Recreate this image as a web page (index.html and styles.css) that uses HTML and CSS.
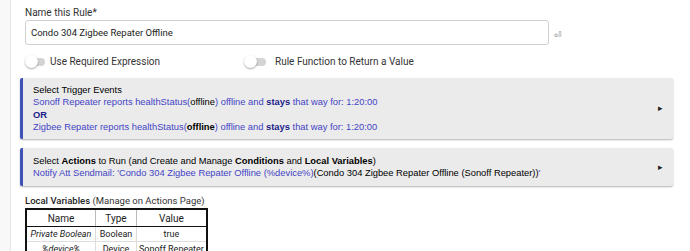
FILE: index.html
```html
<!DOCTYPE html>
<html lang="en">
<head>
<meta charset="UTF-8">
<title>Rule</title>
<link rel="stylesheet" href="styles.css">
</head>
<body>
<div class="side"></div>
<div class="main">
<div class="field">
<label class="label" for="ruleName">Name this Rule*</label>
<div class="input-row">
<input id="ruleName" class="text-input" type="text" value="Condo 304 Zigbee Repater Offline">
<span class="enter">&#9166;</span>
</div>
</div>

<div class="toggles">
<div class="toggle first"><span class="switch"><span class="knob"></span></span>Use Required Expression</div>
<div class="toggle second"><span class="switch"><span class="knob"></span></span>Rule Function to Return a Value</div>
</div>

<div class="panel trigger">
<div class="panel-text">
<div class="title">Select Trigger Events</div>
<div class="blue">Sonoff Repeater reports healthStatus(<span class="black">offline</span>) offline and <b class="navy">stays</b> that way for: 1:20:00</div>
<div class="navy"><b>OR</b></div>
<div class="blue">Zigbee Repater reports healthStatus(<b class="black">offline</b>) offline and <b class="navy">stays</b> that way for: 1:20:00</div>
</div>
<span class="arrow">&#9656;</span>
</div>

<div class="panel actions">
<div class="panel-text">
<div class="title">Select <b>Actions</b> to Run (and Create and Manage <b>Conditions</b> and <b>Local Variables</b>)</div>
<div class="blue">Notify Att Sendmail: 'Condo 304 Zigbee Repater Offline (%device%)<span class="black">(Condo 304 Zigbee Repater Offline (Sonoff Repeater))</span>'</div>
</div>
<span class="arrow">&#9656;</span>
</div>

<div class="locals">
<div class="locals-title"><b>Local Variables</b> (Manage on Actions Page)</div>
<table class="vars">
<tr><th class="c-name">Name</th><th class="c-type">Type</th><th class="c-value">Value</th></tr>
<tr><td><i>Private Boolean</i></td><td>Boolean</td><td>true</td></tr>
<tr><td><i>%device%</i></td><td>Device</td><td>Sonoff Repeater</td></tr>
</table>
</div>
</div>
</body>
</html>
```

FILE: styles.css
```css
body {
margin: 0;
display: flex;
background: #fff;
font-family: Roboto, "Liberation Sans", sans-serif;
color: #333;
height: 251px;
overflow: hidden;
}

.side {
width: 10px;
flex: none;
background: #f8f8f8;
border-right: 1px solid #e6e6e6;
}

.main {
flex: 1;
padding: 5px 17px 0 9px;
}

.field {
padding-left: 5px;
}

.label {
display: block;
font-size: 10px;
line-height: 15px;
}

.input-row {
display: flex;
align-items: center;
}

.text-input {
width: 524px;
height: 25px;
box-sizing: border-box;
margin: 0;
padding: 0 5px;
border: 1px solid #d0d0d0;
border-radius: 3px;
font-family: Roboto, "Liberation Sans", sans-serif;
font-size: 9.5px;
color: #222;
}

.enter {
margin-left: 5px;
margin-top: 4px;
font-size: 9px;
color: #777;
}

.toggles {
display: flex;
padding: 10px 0 0 7px;
font-size: 10px;
line-height: 13px;
}

.toggle {
display: flex;
align-items: center;
color: #333;
}

.toggle.first {
width: 219px;
}

.switch {
position: relative;
width: 18px;
height: 8px;
margin-right: 5px;
background: #d4d4d4;
border-radius: 4px;
}

.second .switch {
width: 20px;
margin-right: 9px;
}

.knob {
position: absolute;
left: -2px;
top: -3px;
width: 13px;
height: 13px;
background: #fff;
border-radius: 50%;
box-shadow: 0 1px 2px rgba(0,0,0,0.35);
}

.panel {
display: flex;
align-items: center;
margin-top: 10px;
background: #ebebeb;
border-left: 3px solid #3f51b5;
border-radius: 2px;
box-shadow: 0 1px 2px rgba(0,0,0,0.3);
font-family: "Liberation Sans", Arial, sans-serif;
font-size: 9.35px;
line-height: 12.5px;
}

.panel-text {
flex: 1;
padding: 5.5px 10px;
}

.actions {
margin-top: 9px;
}

.actions .panel-text {
padding: 6.5px 10px;
}

.title {
color: #000;
}

.blue {
color: #4444c6;
}

.navy {
color: #1c1c8a;
}

.black {
color: #000;
}

.arrow {
margin-right: 10px;
font-size: 9px;
color: #222;
}

.locals {
padding: 8px 0 0 5px;
font-size: 9.5px;
}

.locals-title {
line-height: 13px;
}

.locals-title b {
font-weight: 500;
color: #222;
}

.vars {
border-collapse: collapse;
border: 2px solid #111;
margin-top: 1px;
font-size: 9px;
color: #222;
}

.c-name {
width: 64px;
}

.c-type {
width: 36px;
}

.c-value {
width: 63px;
}

.vars th {
font-weight: normal;
font-size: 10px;
height: 16px;
padding: 0 2px;
border-bottom: 1px solid #111;
border-left: 1px solid #bbb;
}

.vars td {
text-align: center;
height: 14px;
padding: 0 2px;
border-top: 1px solid #ddd;
border-left: 1px solid #ddd;
white-space: nowrap;
}
```
